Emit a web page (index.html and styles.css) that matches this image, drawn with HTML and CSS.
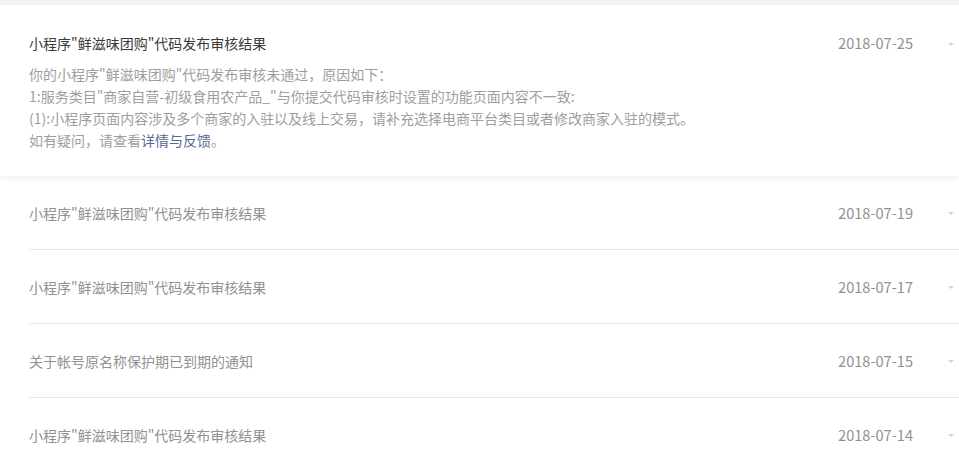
FILE: index.html
```html
<!DOCTYPE html>
<html lang="zh-CN">
<head>
<meta charset="utf-8">
<title>消息列表</title>
<link rel="stylesheet" href="styles.css">
</head>
<body>
<div class="top-band"></div>
<ul class="msg-list">
  <li class="msg msg-open">
    <div class="msg-head">
      <span class="msg-title">小程序"鲜滋味团购"代码发布审核结果</span>
      <span class="msg-date">2018-07-25</span>
      <span class="arrow arrow-up"></span>
    </div>
    <div class="msg-body">
      <p>你的小程序"鲜滋味团购"代码发布审核未通过，原因如下：</p>
      <p>1:服务类目"商家自营-初级食用农产品_"与你提交代码审核时设置的功能页面内容不一致:</p>
      <p>(1):小程序页面内容涉及多个商家的入驻以及线上交易，请补充选择电商平台类目或者修改商家入驻的模式。</p>
      <p>如有疑问，请查看<a class="link" href="#">详情与反馈</a>。</p>
    </div>
  </li>
  <li class="msg">
    <div class="msg-head">
      <span class="msg-title">小程序"鲜滋味团购"代码发布审核结果</span>
      <span class="msg-date">2018-07-19</span>
      <span class="arrow arrow-down"></span>
    </div>
  </li>
  <li class="msg">
    <div class="msg-head">
      <span class="msg-title">小程序"鲜滋味团购"代码发布审核结果</span>
      <span class="msg-date">2018-07-17</span>
      <span class="arrow arrow-down"></span>
    </div>
  </li>
  <li class="msg">
    <div class="msg-head">
      <span class="msg-title">关于帐号原名称保护期已到期的通知</span>
      <span class="msg-date">2018-07-15</span>
      <span class="arrow arrow-down"></span>
    </div>
  </li>
  <li class="msg">
    <div class="msg-head">
      <span class="msg-title">小程序"鲜滋味团购"代码发布审核结果</span>
      <span class="msg-date">2018-07-14</span>
      <span class="arrow arrow-down"></span>
    </div>
  </li>
</ul>
</body>
</html>
```
FILE: styles.css
```css
* { box-sizing: border-box; }
html, body {
  margin: 0;
  padding: 0;
  background: #fff;
  font-family: "Noto Sans CJK SC", "Open Sans", sans-serif;
  overflow: hidden;
}
.top-band {
  height: 5px;
  background: #f3f4f6;
}
.msg-list {
  list-style: none;
  margin: 0;
  padding: 0;
}
.msg {
  margin-left: 29px;
  padding: 27px 0 26px;
  border-bottom: 1px solid #e7e7eb;
}
.msg-open {
  margin-left: 0;
  padding: 28px 0 25px 29px;
  border-bottom: none;
  background: #fff;
  box-shadow: 0 2px 5px rgba(0, 0, 0, 0.07);
  position: relative;
}
.msg-head {
  display: flex;
  align-items: center;
  height: 20px;
  padding-right: 5px;
}
.msg-title {
  flex: 1;
  font-size: 14px;
  line-height: 20px;
  color: #919191;
}
.msg-open .msg-title { color: #3a3a3a; }
.msg-date {
  font-size: 14.6px;
  line-height: 20px;
  color: #919191;
}
.arrow {
  margin-left: 35px;
  width: 0;
  height: 0;
  border-left: 3px solid transparent;
  border-right: 3px solid transparent;
}
.arrow-up { border-bottom: 3px solid #d4d4d4; }
.arrow-down { border-top: 3px solid #d4d4d4; }
.msg-body {
  margin-top: 10px;
  font-size: 14px;
  line-height: 22px;
  color: #9e9e9e;
}
.msg-body p { margin: 0; }
.link {
  color: #576b95;
  text-decoration: none;
}
```
